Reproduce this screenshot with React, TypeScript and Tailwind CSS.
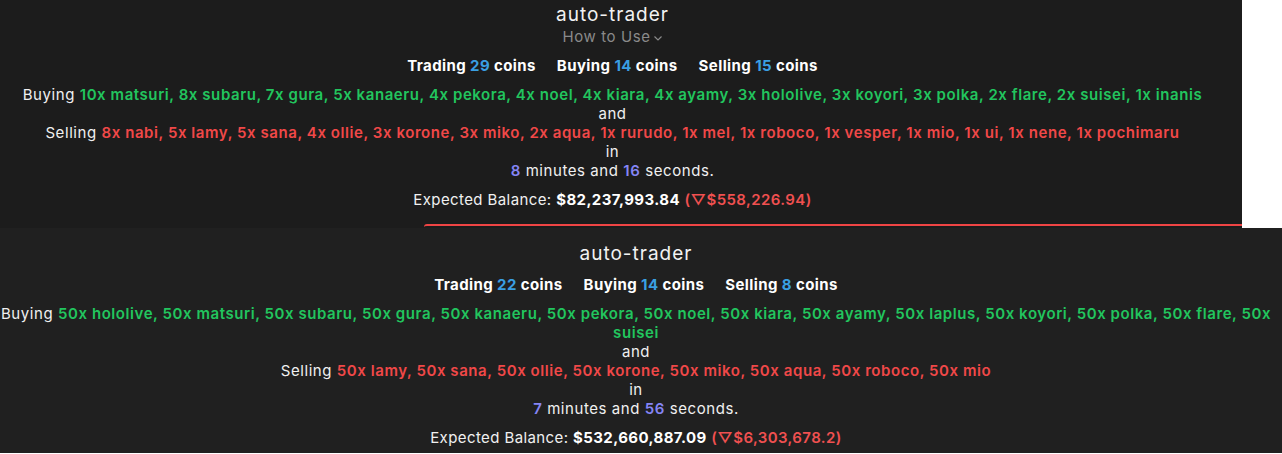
import React from "react";

const font = { fontFamily: "Inter, 'Noto Sans', sans-serif" };

function Stats({ t, b, s }: { t: number; b: number; s: number }) {
  return (
    <div className="flex justify-center gap-[21px] font-bold text-white tracking-[0.4px]">
      <span>
        Trading <span className="text-[#3a9fe2]">{t}</span> coins
      </span>
      <span>
        Buying <span className="text-[#3a9fe2]">{b}</span> coins
      </span>
      <span>
        Selling <span className="text-[#3a9fe2]">{s}</span> coins
      </span>
    </div>
  );
}

function Body({
  buying,
  selling,
  min,
  sec,
  bal,
  diff,
  buyBreak,
}: {
  buying: string;
  selling: string;
  min: number;
  sec: number;
  bal: string;
  diff: string;
  buyBreak?: string;
}) {
  return (
    <>
      <div className="mt-[10px] text-center leading-[19px] text-[#f0f0f0] tracking-[0.57px] whitespace-nowrap">
        <div>
          Buying{" "}
          <span className="font-semibold text-[#22c55e]">
            {buying}
            {buyBreak && (
              <>
                <br />
                {buyBreak}
              </>
            )}
          </span>
        </div>
        <div>and</div>
        <div>
          Selling <span className="font-semibold text-[#f04848]">{selling}</span>
        </div>
        <div>in</div>
        <div>
          <span className="font-semibold text-[#8585f5]">{min}</span> minutes and{" "}
          <span className="font-semibold text-[#8585f5]">{sec}</span> seconds.
        </div>
      </div>
      <div className="mt-[10px] text-center leading-[19px] text-[#f0f0f0] tracking-[0.4px]">
        Expected Balance: <span className="font-bold text-white">{bal}</span>{" "}
        <span className="font-semibold text-[#f05050]">(▽{diff})</span>
      </div>
    </>
  );
}

export default function App() {
  return (
    <div className="w-[1282px] h-[454px] bg-white overflow-hidden text-[15px]" style={font}>
      <div className="flex h-[228px]">
        <div className="relative w-[1242px] h-[228px] bg-[#1c1c1c] pr-[17px] pt-[3px]">
          <div className="text-center text-[19px] leading-[24px] text-[#f2f2f2] tracking-[1px]">auto-trader</div>
          <div className="mt-[1px] flex items-center justify-center gap-[2px] text-[15px] leading-[18px] text-[#8a8a8a] tracking-[0.6px]">
            How to Use
            <svg width="10" height="10" viewBox="0 0 10 10" className="mt-[2px]">
              <path d="M1.5 3.5 L5 7 L8.5 3.5" stroke="#8a8a8a" strokeWidth="1.2" fill="none" />
            </svg>
          </div>
          <div className="mt-[10px] leading-[19px]">
            <Stats t={29} b={14} s={15} />
          </div>
          <Body
            buying="10x matsuri, 8x subaru, 7x gura, 5x kanaeru, 4x pekora, 4x noel, 4x kiara, 4x ayamy, 3x hololive, 3x koyori, 3x polka, 2x flare, 2x suisei, 1x inanis"
            selling="8x nabi, 5x lamy, 5x sana, 4x ollie, 3x korone, 3x miko, 2x aqua, 1x rurudo, 1x mel, 1x roboco, 1x vesper, 1x mio, 1x ui, 1x nene, 1x pochimaru"
            min={8}
            sec={16}
            bal="$82,237,993.84"
            diff="$558,226.94"
          />
          <div className="absolute left-[424px] right-0 top-[224px] h-[4px] rounded-tl-[3px] border-t-2 border-[#ef4444]" />
        </div>
        <div className="flex-1 bg-white" />
      </div>
      <div className="h-[225px] bg-[#202020] pr-[10px] pt-[14px]">
        <div className="text-center text-[19px] leading-[24px] text-[#f2f2f2] tracking-[1px]">auto-trader</div>
        <div className="mt-[9px] leading-[19px]">
          <Stats t={22} b={14} s={8} />
        </div>
        <Body
          buying="50x hololive, 50x matsuri, 50x subaru, 50x gura, 50x kanaeru, 50x pekora, 50x noel, 50x kiara, 50x ayamy, 50x laplus, 50x koyori, 50x polka, 50x flare, 50x"
          buyBreak="suisei"
          selling="50x lamy, 50x sana, 50x ollie, 50x korone, 50x miko, 50x aqua, 50x roboco, 50x mio"
          min={7}
          sec={56}
          bal="$532,660,887.09"
          diff="$6,303,678.2"
        />
      </div>
    </div>
  );
}
